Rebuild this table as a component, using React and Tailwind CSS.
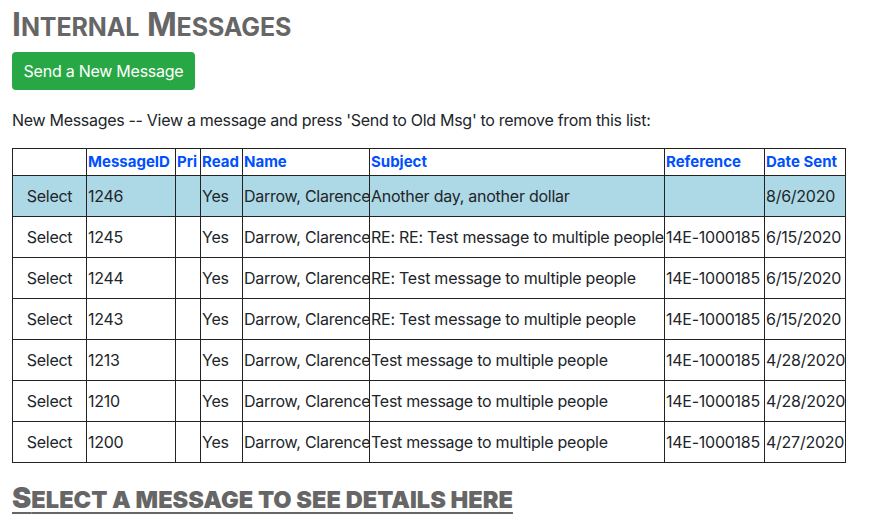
import React from "react";

const rows = [
  { id: "1246", read: "Yes", name: "Darrow, Clarence", subject: "Another day, another dollar", ref: "", date: "8/6/2020", sel: true },
  { id: "1245", read: "Yes", name: "Darrow, Clarence", subject: "RE: RE: Test message to multiple people", ref: "14E-1000185", date: "6/15/2020" },
  { id: "1244", read: "Yes", name: "Darrow, Clarence", subject: "RE: Test message to multiple people", ref: "14E-1000185", date: "6/15/2020" },
  { id: "1243", read: "Yes", name: "Darrow, Clarence", subject: "RE: Test message to multiple people", ref: "14E-1000185", date: "6/15/2020" },
  { id: "1213", read: "Yes", name: "Darrow, Clarence", subject: "Test message to multiple people", ref: "14E-1000185", date: "4/28/2020" },
  { id: "1210", read: "Yes", name: "Darrow, Clarence", subject: "Test message to multiple people", ref: "14E-1000185", date: "4/28/2020" },
  { id: "1200", read: "Yes", name: "Darrow, Clarence", subject: "Test message to multiple people", ref: "14E-1000185", date: "4/27/2020" },
];

const widths = [74, 89, 25, 42, 127, 295, 100, 81];
const heads = ["", "MessageID", "Pri", "Read", "Name", "Subject", "Reference", "Date Sent"];

export default function App() {
  return (
    <div className="min-h-[524px] w-[870px] bg-white pl-3 pt-[6px] text-[#212529] [font-family:Inter,'Liberation_Sans',sans-serif]">
      <h1 className="h-[38px] text-[32px] font-bold leading-[38px] tracking-[-0.1px] text-[#666]">
        I<span className="text-[25px] leading-none">NTERNAL</span> M<span className="text-[25px] leading-none">ESSAGES</span>
      </h1>
      <button className="mt-[8px] h-[38px] w-[183px] rounded-[4px] bg-[#28a745] text-[16px] tracking-[-0.25px] text-white">
        Send a New Message
      </button>
      <p className="mt-[18px] text-[16px] leading-[24px] tracking-[-0.3px]">
        New Messages -- View a message and press 'Send to Old Msg' to remove from this list:
      </p>
      <table className="mt-[16px] table-fixed border-collapse border border-[#222] text-[16px] tracking-[-0.25px]" style={{ width: 834 }}>
        <colgroup>
          {widths.map((w, i) => (
            <col key={i} style={{ width: w }} />
          ))}
        </colgroup>
        <thead>
          <tr className="h-[27px]">
            {heads.map((h, i) => (
              <th key={i} className="overflow-visible whitespace-nowrap border border-[#222] p-0 pl-[1px] text-left align-middle text-[15px] font-bold tracking-normal text-[#0050ff]">
                {h}
              </th>
            ))}
          </tr>
        </thead>
        <tbody>
          {rows.map((r) => (
            <tr key={r.id} className={"h-[41px] " + (r.sel ? "bg-[#add8e6]" : "")}>
              <td className="border border-[#222] p-0 text-center align-middle">Select</td>
              <td className="whitespace-nowrap border border-[#222] p-0 pl-[1px] align-middle">{r.id}</td>
              <td className="border border-[#222] p-0 align-middle"></td>
              <td className="whitespace-nowrap border border-[#222] p-0 pl-[1px] align-middle">{r.read}</td>
              <td className="overflow-visible whitespace-nowrap border border-[#222] p-0 pl-[1px] align-middle">{r.name}</td>
              <td className="overflow-visible whitespace-nowrap border border-[#222] p-0 pl-[1px] align-middle">{r.subject}</td>
              <td className="overflow-visible whitespace-nowrap border border-[#222] p-0 pl-[1px] align-middle">{r.ref}</td>
              <td className="overflow-visible whitespace-nowrap border border-[#222] p-0 pl-[1px] align-middle">{r.date}</td>
            </tr>
          ))}
        </tbody>
      </table>
      <h2 className="mt-[18px] inline-block h-[34px] text-[29px] font-black leading-[34px] text-[#666] underline decoration-[2px] underline-offset-[4px]">
        S<span className="text-[23.6px] leading-none">ELECT A MESSAGE TO SEE DETAILS HERE</span>
      </h2>
    </div>
  );
}
